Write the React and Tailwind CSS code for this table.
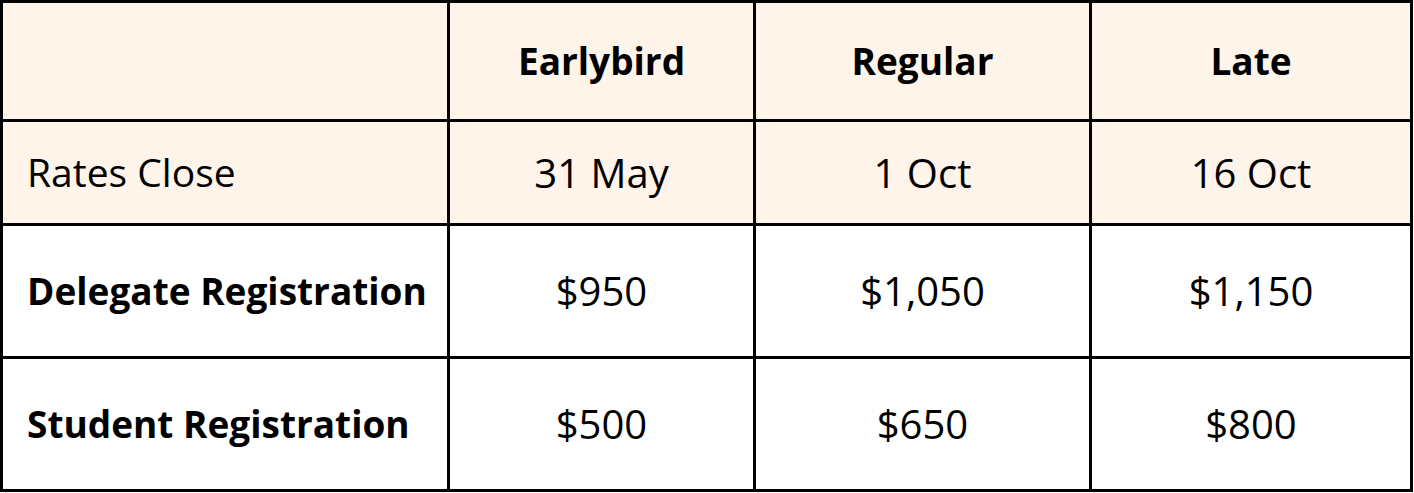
const HEAD = ['', 'Earlybird', 'Regular', 'Late']

const ROWS = [
  { label: 'Rates Close', values: ['31 May', '1 Oct', '16 Oct'], cream: true, bold: false },
  { label: 'Delegate Registration', values: ['$950', '$1,050', '$1,150'], cream: false, bold: true },
  { label: 'Student Registration', values: ['$500', '$650', '$800'], cream: false, bold: true },
]

export default function App() {
  return (
    <div className="w-[1414px] h-[493px] bg-white" style={{ fontFamily: '"Open Sans", "Noto Sans", sans-serif' }}>
      <div className="grid w-[1413px] grid-cols-[444px_303px_333px_318px] grid-rows-[116px_101px_130px_130px] gap-[3px] bg-black p-[3px] text-black">
        {HEAD.map((h, i) => (
          <div key={i} className="flex items-center justify-center bg-[#fef4ea] text-[37px] font-bold">
            {h}
          </div>
        ))}
        {ROWS.map(row => (
          <div key={row.label} className="contents">
            <div className={`flex items-center whitespace-nowrap pl-6 ${row.cream ? 'bg-[#fef4ea]' : 'bg-white'} ${row.bold ? 'text-[37px] font-bold' : 'text-[39px] font-normal'}`}>
              {row.label}
            </div>
            {row.values.map(v => (
              <div key={v} className={`flex items-center justify-center text-[40px] ${row.cream ? 'bg-[#fef4ea]' : 'bg-white'}`}>
                {v}
              </div>
            ))}
          </div>
        ))}
      </div>
    </div>
  )
}
